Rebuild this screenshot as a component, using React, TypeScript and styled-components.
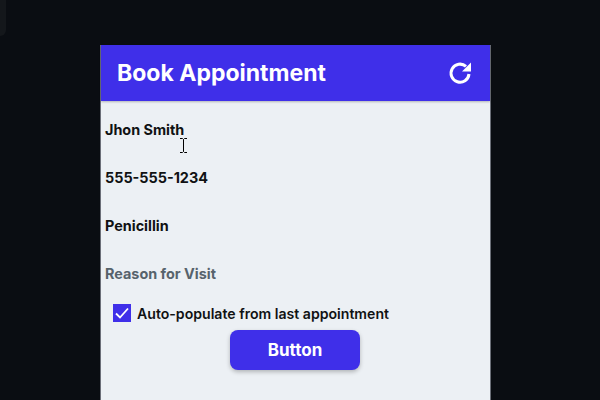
import React from "react";
import styled, { createGlobalStyle } from "styled-components";

const Global = createGlobalStyle`
  html, body { margin: 0; padding: 0; height: 400px; overflow: hidden; background: #0a0d12; }
  body { font-family: "Inter", "Noto Sans", sans-serif; }
`;

const Page = styled.div`
  position: relative;
  width: 600px;
  height: 400px;
  padding: 45px 0 0 100px;
  box-sizing: border-box;
  overflow: hidden;
  background: #0a0d12;
`;

const CornerTab = styled.div`
  position: absolute;
  left: -10px;
  top: -10px;
  width: 16px;
  height: 46px;
  border-radius: 6px;
  background: #14171b;
`;

const Card = styled.section`
  width: 391px;
  height: 370px;
  box-sizing: border-box;
  background: #ecf0f4;
  border-left: 1px solid #6b6f78;
  border-right: 1px solid #6b6f78;
  display: flex;
  flex-direction: column;
`;

const Header = styled.header`
  height: 56px;
  flex: none;
  background: #3f2fe9;
  box-shadow: 0 1px 2px rgba(0, 0, 0, 0.25);
  display: flex;
  align-items: center;
  justify-content: space-between;
  padding: 0 18px 0 16px;
`;

const Title = styled.h1`
  margin: 0;
  font-size: 23px;
  font-weight: 700;
  color: #ffffff;
`;

const Body = styled.div`
  padding: 4px 4px 0;
  display: flex;
  flex-direction: column;
`;

const Field = styled.div<{ $muted?: boolean }>`
  height: 48px;
  display: flex;
  align-items: center;
  font-size: 14.4px;
  font-weight: 700;
  color: ${(p) => (p.$muted ? "#57636c" : "#101213")};
`;

const CheckRow = styled.label`
  display: flex;
  align-items: center;
  gap: 6px;
  height: 32px;
  padding-left: 8px;
  font-size: 14.1px;
  font-weight: 600;
  color: #101213;
`;

const Box = styled.span`
  width: 18px;
  height: 18px;
  background: #3f2fe9;
  display: flex;
  align-items: center;
  justify-content: center;
`;

const ButtonRow = styled.div`
  display: flex;
  justify-content: center;
  padding-right: 1px;
  margin-top: 1px;
`;

const Button = styled.button`
  width: 130px;
  height: 40px;
  border: none;
  border-radius: 8px;
  background: #3f2fe9;
  color: #ffffff;
  font-family: inherit;
  font-size: 17px;
  font-weight: 700;
  box-shadow: 0 2px 4px rgba(0, 0, 0, 0.25);
`;

const Cursor = styled.svg`
  position: absolute;
  left: 180px;
  top: 138px;
`;

export default function App() {
  return (
    <Page>
      <Global />
      <CornerTab />
      <Card>
        <Header>
          <Title>Book Appointment</Title>
          <svg width="24" height="24" viewBox="0 0 24 24" fill="none">
            <path d="M21 13a9 9 0 1 1-3-7.6" stroke="#fff" strokeWidth="3" />
            <path d="M23 1.5V10.5H14Z" fill="#fff" />
          </svg>
        </Header>
        <Body>
          <Field>Jhon Smith</Field>
          <Field>555-555-1234</Field>
          <Field>Penicillin</Field>
          <Field $muted>Reason for Visit</Field>
          <CheckRow>
            <Box>
              <svg width="14" height="12" viewBox="0 0 14 12" fill="none">
                <path d="M1 6.5 5 10.5 13 1.5" stroke="#fff" strokeWidth="1.8" />
              </svg>
            </Box>
            Auto-populate from last appointment
          </CheckRow>
          <ButtonRow>
            <Button>Button</Button>
          </ButtonRow>
        </Body>
      </Card>
      <Cursor width="7" height="15" viewBox="0 0 7 15" fill="none">
        <path d="M0 .5h2.5L3.5 1.5 4.5 .5H7M3.5 1.5v12M0 14.5h2.5l1-1 1 1H7" stroke="#000" />
      </Cursor>
    </Page>
  );
}
